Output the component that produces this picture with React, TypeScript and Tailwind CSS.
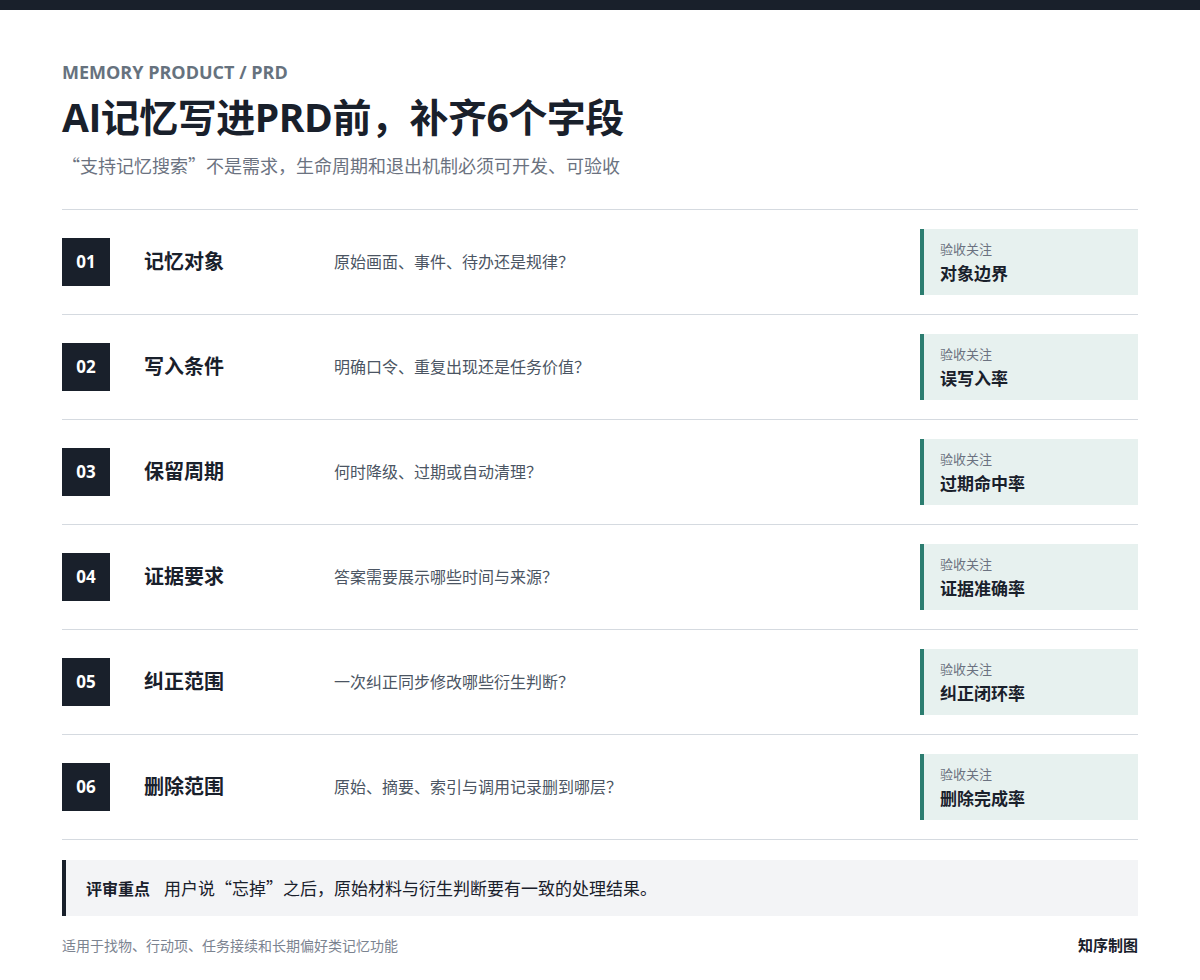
const rows = [
  { no: '01', title: '记忆对象', desc: '原始画面、事件、待办还是规律？', focus: '对象边界' },
  { no: '02', title: '写入条件', desc: '明确口令、重复出现还是任务价值？', focus: '误写入率' },
  { no: '03', title: '保留周期', desc: '何时降级、过期或自动清理？', focus: '过期命中率' },
  { no: '04', title: '证据要求', desc: '答案需要展示哪些时间与来源？', focus: '证据准确率' },
  { no: '05', title: '纠正范围', desc: '一次纠正同步修改哪些衍生判断？', focus: '纠正闭环率' },
  { no: '06', title: '删除范围', desc: '原始、摘要、索引与调用记录删到哪层？', focus: '删除完成率' },
];

const font = { fontFamily: '"Open Sans", "Noto Sans CJK SC", sans-serif' };
const cjk = { fontFamily: '"Noto Sans CJK SC", "Open Sans", sans-serif' };

export default function App() {
  return (
    <div className="min-h-[980px] bg-white" style={font}>
      <div className="h-[10px] bg-[#19202b]" />
      <div className="px-[62px] pt-[50px]">
        <div className="text-[18px] font-bold leading-[24px] text-[#66727e]">MEMORY PRODUCT / PRD</div>
        <h1 className="mt-[8px] text-[39px] font-bold leading-[50px] tracking-[-0.5px] text-[#19202b]">
          AI记忆写进PRD前，补齐6个字段
        </h1>
        <p className="mt-[11px] text-[18px] leading-[24px] text-[#6b7280]" style={cjk}>
          “支持记忆搜索”不是需求，生命周期和退出机制必须可开发、可验收
        </p>

        <div className="mt-[32px] border-t border-[#d5dae0]">
          {rows.map((r) => (
            <div key={r.no} className="flex items-center border-b border-[#d5dae0] py-[19px]">
              <div className="flex h-[48px] w-[48px] shrink-0 items-center justify-center bg-[#19202b] text-[17px] font-bold text-white">
                {r.no}
              </div>
              <div className="ml-[34px] w-[190px] text-[20px] font-bold text-[#19202b]">{r.title}</div>
              <div className="flex-1 text-[16px] text-[#4b5563]">{r.desc}</div>
              <div className="flex h-[66px] w-[218px] flex-col justify-center border-l-[4px] border-[#2c7d70] bg-[#e7f1ef] pl-[16px]">
                <div className="text-[13px] leading-[18px] text-[#6b7280]">验收关注</div>
                <div className="mt-[5px] text-[17px] font-bold leading-[22px] text-[#19202b]">{r.focus}</div>
              </div>
            </div>
          ))}
        </div>

        <div className="mt-[20px] flex h-[56px] items-center border-l-[4px] border-[#19202b] bg-[#f3f4f6] pl-[20px] text-[#19202b]" style={cjk}>
          <span className="text-[16px] font-bold">评审重点</span>
          <span className="ml-[14px] text-[17px]">用户说“忘掉”之后，原始材料与衍生判断要有一致的处理结果。</span>
        </div>

        <div className="mt-[18px] flex items-center justify-between">
          <span className="text-[14px] text-[#7b8390]">适用于找物、行动项、任务接续和长期偏好类记忆功能</span>
          <span className="text-[15px] font-bold text-[#19202b]">知序制图</span>
        </div>
      </div>
    </div>
  );
}
